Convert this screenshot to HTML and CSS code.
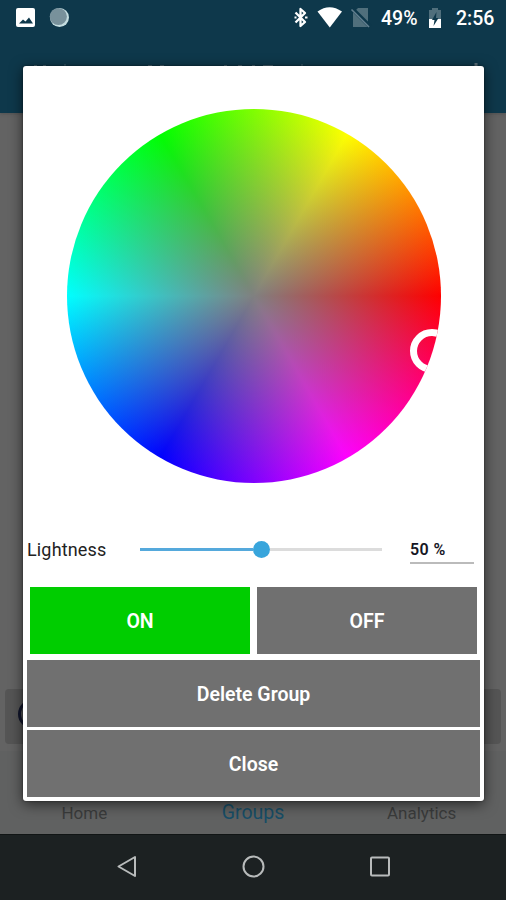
FILE: index.html
```html
<!DOCTYPE html>
<html lang="en">
<head>
<meta charset="utf-8">
<title>Group colour</title>
<link rel="stylesheet" href="styles.css">
</head>
<body>
<div class="screen">
  <header class="app-header">
    <div class="status-bar">
      <svg class="status-left" width="60" height="36" viewBox="0 0 60 36">
        <rect x="1" y="8" width="19" height="19" rx="2" fill="#fff"/>
        <path d="M4 23.500l4-4 2.500 2 3.500-4 4 6z" fill="#0e384b"/>
        <circle cx="44.500" cy="17.500" r="9.500" fill="#c4dde0"/>
        <circle cx="43.300" cy="16.500" r="8.600" fill="#78919b"/>
      </svg>
      <div class="status-right">
        <svg width="80" height="36" viewBox="0 0 80 36">
          <path d="M3.500 12.500l9.500 9.500-4.500 4V9l4.500 4-9.500 9.500" fill="none" stroke="#fff" stroke-width="2.300" stroke-linejoin="round"/>
          <path d="M2.500 17.500h2M13 17.500h2.500" stroke="#fff" stroke-width="2"/>
          <path d="M25.500 11.500Q37.500 3 50 11.500L37.800 27.500z" fill="#fff"/>
          <path d="M66 8h10v19H61V13z" fill="#506f7c"/>
          <path d="M60 8.500l18 18" stroke="#0e384b" stroke-width="4"/>
          <path d="M59.500 9.500l17.500 17.500" stroke="#648090" stroke-width="1.600"/>
        </svg>
        <span class="battery-text">49%</span>
        <svg class="battery" width="14" height="22" viewBox="0 0 14 22">
          <path d="M4 1h6v2h3v9H1V3h3z" fill="#506f7c"/>
          <path d="M1 12h12v9H1z" fill="#fff"/>
          <path d="M8.500 5L4 13h2.500L5.500 19l5-8H8z" fill="#0e384b"/>
        </svg>
        <span class="clock">2:56</span>
      </div>
    </div>
    <svg class="title-edge" width="506" height="4" viewBox="0 0 506 4">
      <path d="M34 2.500h3M43 2.500h3M65 1v2M148 2.500h4M160 2.500h4M224 2.500h3M238 2.500h4M252 2.500h3M263 2.500h10M302 1v2" stroke="#4b6673" stroke-width="1"/>
      <path d="M476 0v4" stroke="#5b707b" stroke-width="3"/>
    </svg>
  </header>
  <main class="content"><div class="group-card"><svg width="22" height="30" viewBox="0 0 22 30"><circle cx="16" cy="14" r="13.500" fill="none" stroke="#11152b" stroke-width="3"/></svg></div></main>
  <nav class="tabs"><span>Home</span><span class="active">Groups</span><span>Analytics</span></nav>
  <footer class="system-nav">
    <svg width="24" height="26" viewBox="0 0 24 26"><path d="M20 3v19L3.500 12.500z" fill="none" stroke="#b8bbbb" stroke-width="2" stroke-linejoin="round"/></svg>
    <svg width="24" height="26" viewBox="0 0 24 26"><circle cx="12.500" cy="12.500" r="10" fill="none" stroke="#b8bbbb" stroke-width="2"/></svg>
    <svg width="24" height="26" viewBox="0 0 24 26"><rect x="3" y="3.500" width="18" height="18" rx="1" fill="none" stroke="#b8bbbb" stroke-width="2"/></svg>
  </footer>
  <section class="dialog">
    <div class="wheel"><div class="picker"></div></div>
    <div class="lightness">
      <span class="label">Lightness</span>
      <div class="slider"><div class="fill"></div><div class="thumb"></div><div class="rest"></div></div>
      <div class="value">50 %</div>
    </div>
    <div class="toggles"><div class="button on">ON</div><div class="button">OFF</div></div>
    <div class="actions"><div class="button">Delete Group</div><div class="button">Close</div></div>
  </section>
</div>
</body>
</html>
```
FILE: styles.css
```css
* { box-sizing: border-box; }
body { margin: 0; font-family: Roboto, sans-serif; }
svg { display: block; flex: none; }
.screen {
  position: relative;
  width: 506px;
  height: 900px;
  display: flex;
  flex-direction: column;
  overflow: hidden;
  background: #636363;
}
.app-header { height: 113px; background: #0e384b; box-shadow: 0 1px 3px #4448; }
.status-bar {
  height: 36px;
  display: flex;
  justify-content: space-between;
  padding: 0 10px 0 15px;
  color: #fff;
}
.status-right { display: flex; align-items: center; }
.battery-text, .clock { font-size: 19.500px; font-weight: 500; white-space: nowrap; padding-top: 1px; }
.battery-text { width: 38px; margin-left: 9px; }
.battery { margin: 0 14px 0 9px; }
.clock { width: 40px; }
.title-edge { margin-top: 27px; }
.content { flex: 1; display: flex; flex-direction: column; justify-content: flex-end; padding: 0 5px 7px; }
.group-card {
  height: 55px;
  border-radius: 4px;
  background: #555;
  padding: 11px 0 0 12px;
}
.tabs {
  height: 83px;
  display: flex;
  justify-content: space-around;
  align-items: flex-end;
  padding-bottom: 10px;
  background: #606161;
  color: #3a3b3b;
  font-size: 17px;
  line-height: 22px;
}
.tabs span { width: 168px; text-align: center; }
.tabs .active { color: #174d66; font-size: 19.500px; }
.system-nav {
  height: 66px;
  display: flex;
  justify-content: center;
  align-items: center;
  gap: 102.500px;
  padding-bottom: 2px;
  background: #1c2122;
  border-top: 1px solid #111515;
}
.dialog {
  position: absolute;
  left: 23px;
  top: 66px;
  width: 461px;
  height: 735px;
  display: flex;
  flex-direction: column;
  padding: 43px 4px 4px;
  border-radius: 3px;
  background: #fff;
  box-shadow: 0 3px 14px #0009, 0 0 2px #0008;
}
.wheel {
  position: relative;
  width: 374px;
  height: 374px;
  margin-left: 40px;
  flex: none;
  overflow: hidden;
  border-radius: 50%;
  background:
    radial-gradient(circle closest-side, #808080 0%, #80808000 100%),
    conic-gradient(from 90deg, #f00, #f0f, #00f, #0ff, #0f0, #ff0, #f00);
}
.picker {
  position: absolute;
  left: 343px;
  top: 220px;
  width: 44px;
  height: 44px;
  border: 7px solid #fff;
  border-radius: 50%;
}
.lightness {
  height: 104px;
  display: flex;
  align-items: center;
  padding-top: 28px;
  flex: none;
}
.label { width: 113px; color: #222; font-size: 18px; letter-spacing: .15px; }
.slider { width: 242px; height: 18px; display: flex; align-items: center; }
.fill { width: 113px; height: 3px; background: #55a9dc; }
.thumb { width: 17px; height: 17px; border-radius: 50%; background: #38a5dc; }
.rest { flex: 1; height: 3px; background: #dcdcdc; }
.value {
  width: 64px;
  height: 30px;
  margin-left: 28px;
  border-bottom: 2px solid #bbb;
  font-size: 16px;
  font-weight: 600;
  letter-spacing: .4px;
  line-height: 31px;
  color: #151525;
}
.toggles { display: flex; gap: 7px; padding: 0 3px; }
.button {
  height: 67px;
  flex: 1;
  display: flex;
  align-items: center;
  justify-content: center;
  padding-top: 2px;
  background: #707070;
  color: #fff;
  font-size: 19.500px;
  font-weight: 600;
}
.button.on { background: #00cd00; }
.actions { display: flex; flex-direction: column; gap: 3px; margin-top: 6px; }
.actions .button { flex: none; }
```
